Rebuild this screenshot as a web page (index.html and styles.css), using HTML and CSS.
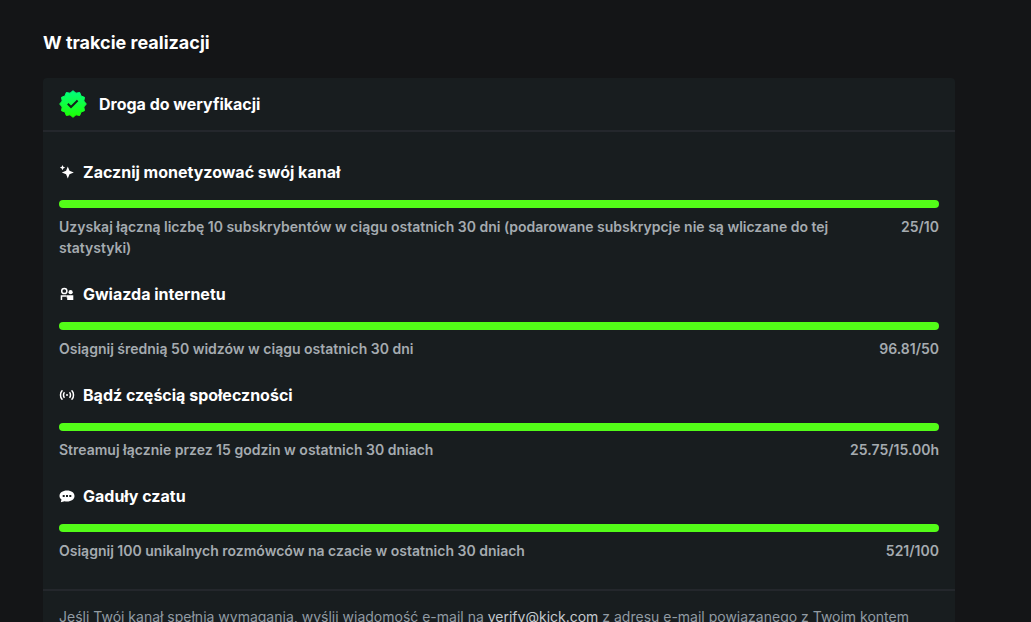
FILE: index.html
```html
<!DOCTYPE html>
<html lang="pl">
<head>
    <meta charset="UTF-8">
    <meta name="viewport" content="width=device-width, initial-scale=1.0">
    <title>Osiągnięcia</title>
    <link rel="stylesheet" href="styles.css">
</head>
<body>
    <main class="container">
        <h1>W trakcie realizacji</h1>

        <section class="card">
            <header class="card-header">
                <svg class="badge" viewBox="0 0 28 28">
                    <defs>
                        <linearGradient id="badge-fill" x1="0" y1="0" x2="0" y2="1">
                            <stop offset="0" stop-color="#00ff80"/>
                            <stop offset="1" stop-color="#1eff00"/>
                        </linearGradient>
                    </defs>
                    <path fill="url(#badge-fill)" stroke="url(#badge-fill)" stroke-linejoin="round" d="M14 .7l3 2.500 3.700-.7 1.300 3.500 3.500 1.300-.7 3.700 2.500 3-2.500 3 .7 3.700-3.500 1.300-1.300 3.500-3.700-.7-3 2.500-3-2.500-3.700.7L6 22l-3.500-1.300.7-3.700-2.500-3 2.500-3-.7-3.700L6 6l1.300-3.500 3.700.7z"/>
                    <path fill="none" stroke="#12201a" stroke-width="2" d="M8.800 13.800l3.200 3.200 6.600-6.500"/>
                </svg>
                <h2>Droga do weryfikacji</h2>
            </header>

            <div class="card-body">
                <div class="goal">
                    <h3>
                        <svg class="icon" viewBox="0 0 16 16">
                            <path d="M8.800 2.400l1.700 4.300 4.300 1.800-4.300 1.800-1.700 4.300-1.700-4.300-4.300-1.800 4.300-1.800z"/>
                            <path d="M3.500 1l.8 1.800 1.800.8-1.800.8-.8 1.800-.8-1.800L.9 3.600l1.800-.8z"/>
                        </svg>
                        Zacznij monetyzować swój kanał
                    </h3>
                    <div class="progress"></div>
                    <div class="details">
                        <p>Uzyskaj łączną liczbę 10 subskrybentów w ciągu ostatnich 30 dni (podarowane subskrypcje nie są wliczane do tej statystyki)</p>
                        <span>25/10</span>
                    </div>
                </div>

                <div class="goal">
                    <h3>
                        <svg class="icon" viewBox="0 0 16 16">
                            <circle cx="5.300" cy="5" r="2.600" fill="none" stroke="#fff" stroke-width="1.500"/>
                            <circle cx="11.600" cy="6.200" r="2.100"/>
                            <path d="M1.700 14v-4.800h5.800v1.500H3.200V14z"/>
                            <path d="M7.500 9.200h6.800V14H8.200v-2.600h-.7z"/>
                        </svg>
                        Gwiazda internetu
                    </h3>
                    <div class="progress"></div>
                    <div class="details">
                        <p>Osiągnij średnią 50 widzów w ciągu ostatnich 30 dni</p>
                        <span>96.81/50</span>
                    </div>
                </div>

                <div class="goal">
                    <h3>
                        <svg class="icon" viewBox="0 0 16 16">
                            <circle cx="8" cy="8" r="1"/>
                            <path fill="none" stroke="#fff" stroke-width="1.500" d="M3.600 3.800H3Q1.500 5 1.500 8T3 12.200h.6M12.400 3.800h.6Q14.500 5 14.500 8T13 12.200h-.6M5.500 5.200Q4.500 6.200 4.500 8t1 2.800M10.500 5.200q1 1 1 2.800t-1 2.800"/>
                        </svg>
                        Bądź częścią społeczności
                    </h3>
                    <div class="progress"></div>
                    <div class="details">
                        <p>Streamuj łącznie przez 15 godzin w ostatnich 30 dniach</p>
                        <span>25.75/15.00h</span>
                    </div>
                </div>

                <div class="goal">
                    <h3>
                        <svg class="icon" viewBox="0 0 16 16">
                            <path fill-rule="evenodd" d="M8 2.500c4.400 0 7.500 2.300 7.500 5.500s-3.100 5.500-7.500 5.500c-.9 0-1.700-.1-2.400-.2L1.800 14.200l.7-2.600C1.200 10.600.5 9.400.5 8c0-3.200 3.100-5.500 7.500-5.500zM3.700 7v2h2V7zM7 7v2h2V7zm3.300 0v2h2V7z"/>
                        </svg>
                        Gaduły czatu
                    </h3>
                    <div class="progress"></div>
                    <div class="details">
                        <p>Osiągnij 100 unikalnych rozmówców na czacie w ostatnich 30 dniach</p>
                        <span>521/100</span>
                    </div>
                </div>
            </div>

            <footer class="card-footer">
                Jeśli Twój kanał spełnia wymagania, wyślij wiadomość e-mail na <a>verify@kick.com</a> z adresu e-mail powiązanego z Twoim kontem
            </footer>
        </section>
    </main>
</body>
</html>
```
FILE: styles.css
```css
* {
    margin: 0;
    padding: 0;
    box-sizing: border-box;
}

body {
    font-family: 'Inter', sans-serif;
    background-color: #141517;
    color: #fff;
    height: 100vh;
    overflow: hidden;
}

.container {
    width: 955px;
    padding: 29px 0 0 43px;
}

h1 {
    font-size: 18px;
    line-height: 27px;
    font-weight: 700;
    margin-bottom: 22px;
}

/* Karta */
.card {
    background-color: #181d1f;
    border-radius: 4px;
}

.card-header {
    display: flex;
    align-items: center;
    gap: 12px;
    height: 54px;
    padding: 0 16px;
    border-bottom: 2px solid #24272c;
}

.badge {
    width: 28px;
    height: 28px;
}

h2, h3 {
    font-size: 16px;
    line-height: 24px;
    font-weight: 700;
}

.card-body {
    display: flex;
    flex-direction: column;
    gap: 24px;
    padding: 28px 16px;
}

/* Cele */
h3 {
    display: flex;
    align-items: center;
    gap: 8px;
}

.icon {
    width: 16px;
    height: 16px;
    fill: #fff;
}

.progress {
    height: 8px;
    margin: 16px 0 8px;
    border-radius: 4px;
    background-color: #53fc18;
}

.details {
    display: flex;
    justify-content: space-between;
    gap: 60px;
    font-size: 14px;
    line-height: 21px;
    font-weight: 600;
    color: #a5abb0;
}

.details span {
    white-space: nowrap;
}

.card-footer {
    padding: 15px 16px;
    border-top: 2px solid #24272c;
    font-size: 14px;
    line-height: 21px;
    color: #919ba3;
}

.card-footer a {
    color: #c5cacf;
}
```
